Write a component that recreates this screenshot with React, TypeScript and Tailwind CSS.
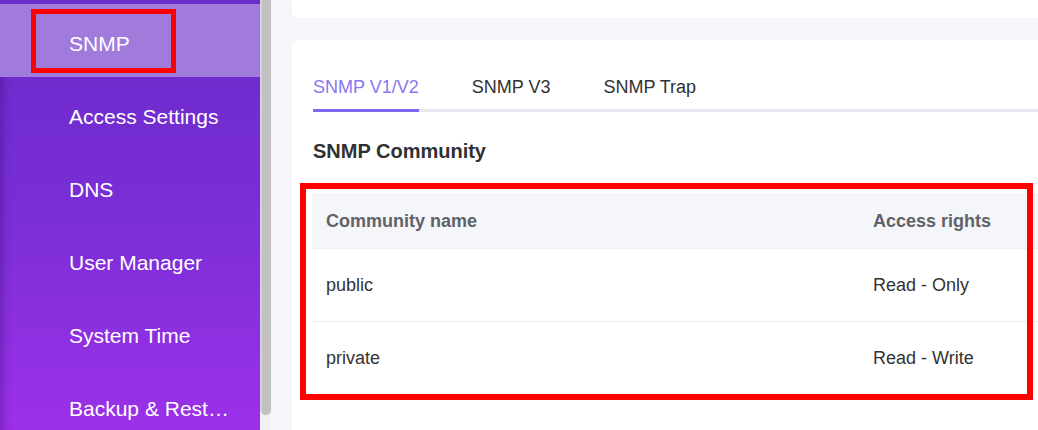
import React from "react";

const items = ["SNMP", "Access Settings", "DNS", "User Manager", "System Time", "Backup & Rest…"];

export default function App() {
  return (
    <div className="relative flex h-[430px] w-[1038px] overflow-hidden bg-[#f5f6fa] font-['Liberation_Sans',Arial,sans-serif]">
      {/* Sidebar */}
      <div className="flex w-[260px] shrink-0 flex-col bg-gradient-to-b from-[#6a2ac9] via-[#7a2ed6] to-[#9c30e8] shadow-[inset_10px_0_10px_-8px_rgba(40,0,90,0.35)]">
        <div className="h-[4px] shrink-0 bg-[#6b2ec8]" />
        {items.map((t, i) => (
          <div
            key={t}
            className={
              "flex h-[73px] shrink-0 items-center pl-[69px] pr-[20px] pt-[6px] text-[21px] leading-[24px] text-white " +
              (i === 0 ? "bg-[#a07bdc]" : "")
            }
          >
            <span className="block whitespace-nowrap">{t}</span>
          </div>
        ))}
      </div>
      {/* Scrollbar */}
      <div className="flex w-[11px] shrink-0 flex-col bg-[#f1f1f1]">
        <div className="h-[415px] rounded-b-[5px] border-l-[2px] border-[#d6cde6] bg-[#c1c1c1]" />
      </div>
      {/* Main */}
      <div className="flex min-w-0 flex-1 flex-col pl-[21px]">
        <div className="h-[18px] shrink-0 rounded-bl-[6px] bg-white" />
        <div className="mt-[22px] flex flex-1 flex-col rounded-tl-[6px] bg-white pl-[21px] pt-[35px]">
          <div className="flex border-b-[3px] border-[#e6e8ef] text-[18px] leading-[24px]">
            <div className="relative mr-[53px] pb-[10px] text-[#8878f0]">
              SNMP V1/V2
              <div className="absolute bottom-[-3px] left-0 right-0 h-[3px] bg-[#7b68ee]" />
            </div>
            <div className="mr-[53px] pb-[10px] text-[#303133]">SNMP V3</div>
            <div className="pb-[10px] text-[#303133]">SNMP Trap</div>
          </div>
          <div className="mt-[27px] text-[20px] font-bold leading-[24px] text-[#303133]">SNMP Community</div>
          <div className="mt-[30px] -ml-px flex flex-col text-[18px] leading-[24px]">
            <div className="grid h-[56px] grid-cols-[547px_1fr] items-center border-b border-[#ebeef5] bg-[#f5f6fa] font-bold text-[#5f6268]">
              <div className="pl-[14px]">Community name</div>
              <div className="pl-[14px]">Access rights</div>
            </div>
            <div className="grid h-[73px] grid-cols-[547px_1fr] items-center border-b border-[#ebeef5] text-[#333333]">
              <div className="pl-[14px]">public</div>
              <div className="pl-[14px]">Read - Only</div>
            </div>
            <div className="grid h-[72px] grid-cols-[547px_1fr] items-center text-[#333333]">
              <div className="pl-[14px]">private</div>
              <div className="pl-[14px]">Read - Write</div>
            </div>
          </div>
        </div>
      </div>
      {/* Annotation boxes */}
      <div className="pointer-events-none absolute left-[31px] top-[9px] h-[64px] w-[145px] border-[5px] border-[#ff0000]" />
      <div className="pointer-events-none absolute left-[300px] top-[183px] h-[217px] w-[733px] border-[6px] border-[#ff0000]" />
    </div>
  );
}
